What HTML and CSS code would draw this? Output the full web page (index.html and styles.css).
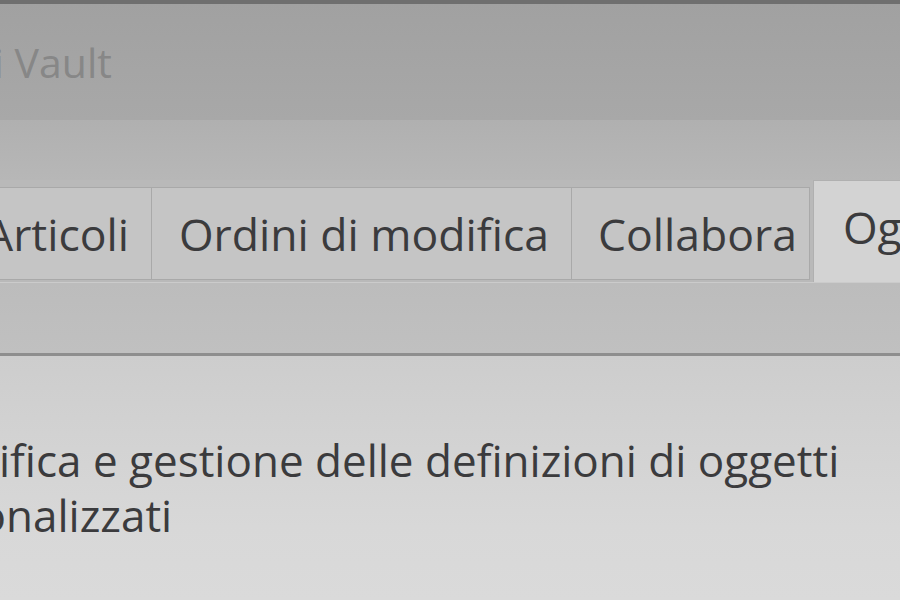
FILE: index.html
```html
<!DOCTYPE html>
<html>
<head>
  <title>Impostazioni di Vault</title>
  <link rel="stylesheet" href="styles.css">
</head>
<body>
  <div class="window">
    <div class="frame-top"></div>

    <!-- Title bar -->
    <div class="titlebar">
      <span class="title">Impostazioni di Vault</span>
    </div>

    <div class="band"></div>

    <!-- Tab strip -->
    <div class="tabs">
      <div class="tab tab-first">Articoli</div>
      <div class="tab tab-eco">Ordini di modifica</div>
      <div class="tab tab-collab">Collabora</div>
      <div class="tab active">Oggetti personalizzati</div>
    </div>

    <div class="tab-gap"></div>

    <!-- Page body -->
    <div class="panel">
      <p class="desc">Modifica e gestione delle definizioni di oggetti<br>personalizzati</p>
    </div>
  </div>
</body>
</html>
```

FILE: styles.css
```css
:root {
  --text: #3b3b3d;
  --tab-bg: #c5c5c5;
  --tab-border: #a9a9a9;
}

body {
  margin: 0;
  font-family: 'Open Sans', 'Noto Sans', sans-serif;
  background: #d6d6d6;
  color: var(--text);
}

.window {
  width: 900px;
  height: 600px;
  overflow: hidden;
  display: flex;
  flex-direction: column;
}

.frame-top {
  height: 4px;
  background: #6f6f6f;
  flex: none;
}

.titlebar {
  height: 116px;
  flex: none;
  background: linear-gradient(#a1a1a1, #a8a8a8);
  display: flex;
  align-items: flex-start;
  padding-top: 30px;
  box-sizing: border-box;
  white-space: nowrap;
}

.title {
  font-size: 41px;
  line-height: 56px;
  color: #878787;
  margin-left: -288px;
}

.band {
  height: 60px;
  flex: none;
  background: linear-gradient(#b0b0b0, #b7b7b7);
}

.tabs {
  height: 102px;
  flex: none;
  display: flex;
  align-items: flex-start;
  background: #b9b9b9;
  white-space: nowrap;
}

.tab {
  margin-top: 7px;
  height: 93px;
  box-sizing: border-box;
  padding: 0 22px 0 26px;
  display: flex;
  align-items: center;
  font-size: 44.5px;
  background: var(--tab-bg);
  border: 1px solid var(--tab-border);
  border-left: none;
}

.tab-first {
  margin-left: -15px;
  padding-left: 0;
  padding-right: 22px;
}

.tab-eco {
  padding-left: 27px;
  padding-right: 22px;
}

.tab-collab {
  padding-left: 26px;
  padding-right: 12px;
}

.active {
  margin-top: 0;
  height: 102px;
  margin-left: 3px;
  padding-left: 29px;
  padding-bottom: 10px;
  background: #d3d3d3;
  border: 1px solid #b0b0b0;
  border-bottom: none;
}

.tab-gap {
  height: 70px;
  flex: none;
  background: linear-gradient(#bcbcbc, #c0c0c0);
  border-top: 1px solid #cbcbcb;
  border-bottom: 3px solid #8e8e8e;
}

.panel {
  flex: 1;
  background: linear-gradient(#cdcdcd, #d8d8d8 70%, #dadada);
  padding-top: 77px;
}

.desc {
  margin: 0 0 0 -111px;
  text-indent: 17px;
  font-size: 44px;
  line-height: 55px;
  white-space: nowrap;
}
```
